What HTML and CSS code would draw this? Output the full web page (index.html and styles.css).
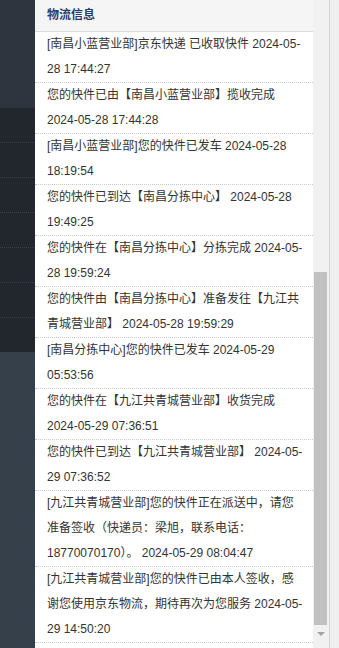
FILE: index.html
```html
<!DOCTYPE html>
<html lang="zh-CN">
<head>
    <meta charset="UTF-8">
    <meta name="viewport" content="width=device-width, initial-scale=1.0">
    <title>物流信息</title>
    <link rel="stylesheet" href="styles.css">
</head>
<body>
    <div class="layout">
        <!-- left navigation strip, mostly hidden behind the dialog -->
        <aside class="sidebar">
            <div class="sidebar-top"></div>
            <ul class="sidebar-menu">
                <li></li>
                <li></li>
                <li></li>
                <li></li>
                <li></li>
                <li></li>
                <li></li>
            </ul>
        </aside>

        <section class="panel">
            <div class="panel-title">物流信息</div>
            <ul class="track-list">
                <li>[南昌小蓝营业部]京东快递 已收取快件 2024-05-28 17:44:27</li>
                <li>您的快件已由【南昌小蓝营业部】揽收完成 2024-05-28 17:44:28</li>
                <li>[南昌小蓝营业部]您的快件已发车 2024-05-28 18:19:54</li>
                <li>您的快件已到达【南昌分拣中心】 2024-05-28 19:49:25</li>
                <li>您的快件在【南昌分拣中心】分拣完成 2024-05-28 19:59:24</li>
                <li>您的快件由【南昌分拣中心】准备发往【九江共青城营业部】 2024-05-28 19:59:29</li>
                <li>[南昌分拣中心]您的快件已发车 2024-05-29 05:53:56</li>
                <li>您的快件在【九江共青城营业部】收货完成 2024-05-29 07:36:51</li>
                <li>您的快件已到达【九江共青城营业部】 2024-05-29 07:36:52</li>
                <li>[九江共青城营业部]您的快件正在派送中，请您准备签收（快递员：梁旭，联系电话：18770070170）。 2024-05-29 08:04:47</li>
                <li>[九江共青城营业部]您的快件已由本人签收，感谢您使用京东物流，期待再次为您服务 2024-05-29 14:50:20</li>
            </ul>
        </section>

        <div class="scrollbar">
            <div class="scroll-space"></div>
            <div class="scroll-thumb"></div>
            <div class="scroll-btn"><span class="arrow-down"></span></div>
        </div>

        <div class="page-edge"></div>
    </div>
</body>
</html>
```

FILE: styles.css
```css
body {
    margin: 0;
    padding: 0;
    font-family: "Liberation Sans", Arial, "Noto Sans CJK SC", sans-serif;
    font-size: 12px;
    color: #333;
    background-color: #fff;
}

.layout {
    display: flex;
    height: 648px;
    overflow: hidden;
}

/* sidebar */
.sidebar {
    width: 35px;
    flex-shrink: 0;
    display: flex;
    flex-direction: column;
    background-color: #36404b;
}

.sidebar-top {
    height: 108px;
    background-color: #2e353e;
}

.sidebar-menu {
    list-style: none;
    margin: 0;
    padding: 0;
    background-color: #22262d;
}

.sidebar-menu li {
    height: 34px;
    border-bottom: 1px dotted #3a4049;
}

.sidebar-menu li:last-child {
    border-bottom: none;
}

/* dialog panel */
.panel {
    width: 278px;
    flex-shrink: 0;
    background-color: #fff;
}

.panel-title {
    height: 31px;
    line-height: 31px;
    padding: 0 12px;
    background-color: #f5f5f5;
    border-bottom: 1px solid #dcdcdc;
    font-weight: bold;
    color: #2b3d66;
}

.track-list {
    list-style: none;
    margin: 0;
    padding: 0;
}

.track-list li {
    padding: 0 8px 0 12px;
    line-height: 25px;
    border-bottom: 1px dotted #c8c8c8;
}

/* fake scrollbar */
.scrollbar {
    width: 16px;
    flex-shrink: 0;
    display: flex;
    flex-direction: column;
    background-color: #f1f1f1;
}

.scroll-space {
    height: 272px;
}

.scroll-thumb {
    height: 353px;
    margin: 0 2px 0 1px;
    background-color: #c1c1c1;
}

.scroll-btn {
    height: 17px;
    display: flex;
    align-items: center;
    justify-content: center;
}

.arrow-down {
    width: 0;
    height: 0;
    border-left: 4px solid transparent;
    border-right: 4px solid transparent;
    border-top: 4px solid #a3a3a3;
}

.page-edge {
    flex: 1;
    background-color: #efefef;
    border-left: 1px solid #d4d4d4;
}
```
